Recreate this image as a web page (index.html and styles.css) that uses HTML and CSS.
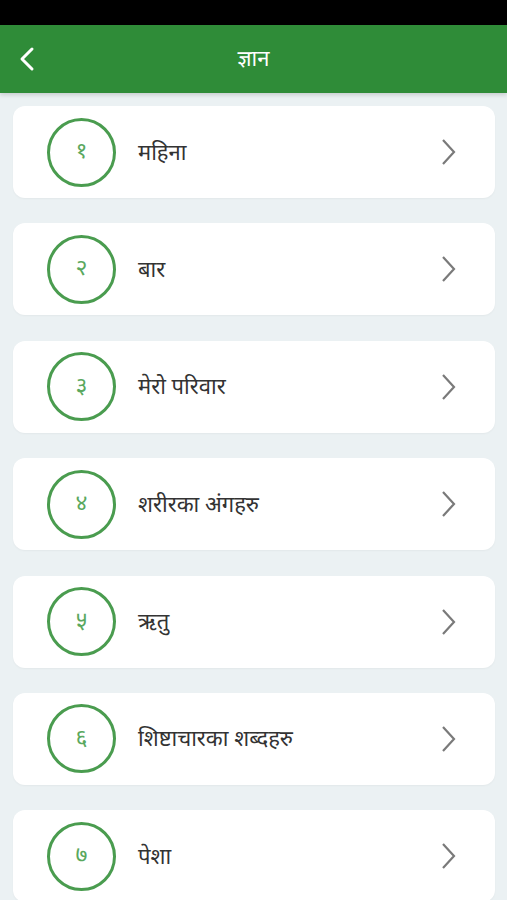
FILE: index.html
```html
<!DOCTYPE html>
<html lang="ne">
<head>
    <meta charset="UTF-8">
    <meta name="viewport" content="width=device-width, initial-scale=1.0">
    <title>ज्ञान</title>
    <link rel="stylesheet" href="styles.css">
</head>
<body>
    <div class="status-bar"></div>
    <header class="app-bar">
        <a class="back" href="#">
            <svg width="18" height="26" viewBox="0 0 18 26"><path d="M14 3 L4 13 L14 23" fill="none" stroke="#fff" stroke-width="3" stroke-linecap="round" stroke-linejoin="round"/></svg>
        </a>
        <h1>ज्ञान</h1>
    </header>

    <div class="list">
        <a class="card" href="#">
            <span class="num">१</span>
            <span class="label">महिना</span>
            <svg class="chev" width="16" height="28" viewBox="0 0 16 28"><path d="M3 2 L14 14 L3 26" fill="none" stroke="#7a7a7a" stroke-width="2.2"/></svg>
        </a>
        <a class="card" href="#">
            <span class="num">२</span>
            <span class="label">बार</span>
            <svg class="chev" width="16" height="28" viewBox="0 0 16 28"><path d="M3 2 L14 14 L3 26" fill="none" stroke="#7a7a7a" stroke-width="2.2"/></svg>
        </a>
        <a class="card" href="#">
            <span class="num">३</span>
            <span class="label">मेरो परिवार</span>
            <svg class="chev" width="16" height="28" viewBox="0 0 16 28"><path d="M3 2 L14 14 L3 26" fill="none" stroke="#7a7a7a" stroke-width="2.2"/></svg>
        </a>
        <a class="card" href="#">
            <span class="num">४</span>
            <span class="label">शरीरका अंगहरु</span>
            <svg class="chev" width="16" height="28" viewBox="0 0 16 28"><path d="M3 2 L14 14 L3 26" fill="none" stroke="#7a7a7a" stroke-width="2.2"/></svg>
        </a>
        <a class="card" href="#">
            <span class="num">५</span>
            <span class="label">ऋतु</span>
            <svg class="chev" width="16" height="28" viewBox="0 0 16 28"><path d="M3 2 L14 14 L3 26" fill="none" stroke="#7a7a7a" stroke-width="2.2"/></svg>
        </a>
        <a class="card" href="#">
            <span class="num">६</span>
            <span class="label">शिष्टाचारका शब्दहरु</span>
            <svg class="chev" width="16" height="28" viewBox="0 0 16 28"><path d="M3 2 L14 14 L3 26" fill="none" stroke="#7a7a7a" stroke-width="2.2"/></svg>
        </a>
        <a class="card" href="#">
            <span class="num">७</span>
            <span class="label">पेशा</span>
            <svg class="chev" width="16" height="28" viewBox="0 0 16 28"><path d="M3 2 L14 14 L3 26" fill="none" stroke="#7a7a7a" stroke-width="2.2"/></svg>
        </a>
    </div>
</body>
</html>
```

FILE: styles.css
```css
body {
    margin: 0;
    padding: 0;
    background-color: #ebf1f3;
    font-family: "Noto Sans Devanagari", "Lohit Devanagari", "Noto Sans", sans-serif;
    height: 900px;
    overflow: hidden;
}
.status-bar {
    height: 25px;
    background-color: #000;
}
.app-bar {
    height: 68px;
    background-color: #2f8c38;
    display: flex;
    align-items: center;
    justify-content: center;
    position: relative;
    box-shadow: 0 2px 4px rgba(0, 0, 0, 0.15);
}
.back {
    position: absolute;
    left: 18px;
    top: 21px;
    display: flex;
}
.app-bar h1 {
    margin: 3px 0 0;
    color: #fff;
    font-size: 22px;
    font-weight: normal;
}
.list {
    padding: 13px 12px 0 13px;
    display: flex;
    flex-direction: column;
    gap: 25.4px;
}
.card {
    height: 92px;
    background-color: #fff;
    border-radius: 12px;
    box-shadow: 0 1px 2px rgba(0, 0, 0, 0.04);
    display: flex;
    align-items: center;
    padding: 0 39px 0 34px;
    text-decoration: none;
    flex-shrink: 0;
}
.num {
    width: 63px;
    height: 63px;
    border: 3px solid #4a9c4f;
    border-radius: 50%;
    display: flex;
    align-items: center;
    justify-content: center;
    color: #5aa85e;
    font-size: 23px;
    flex-shrink: 0;
}
.label {
    margin-left: 22px;
    padding-top: 4px;
    flex: 1;
    color: #333;
    font-size: 22px;
}
.chev {
    flex-shrink: 0;
}
```
